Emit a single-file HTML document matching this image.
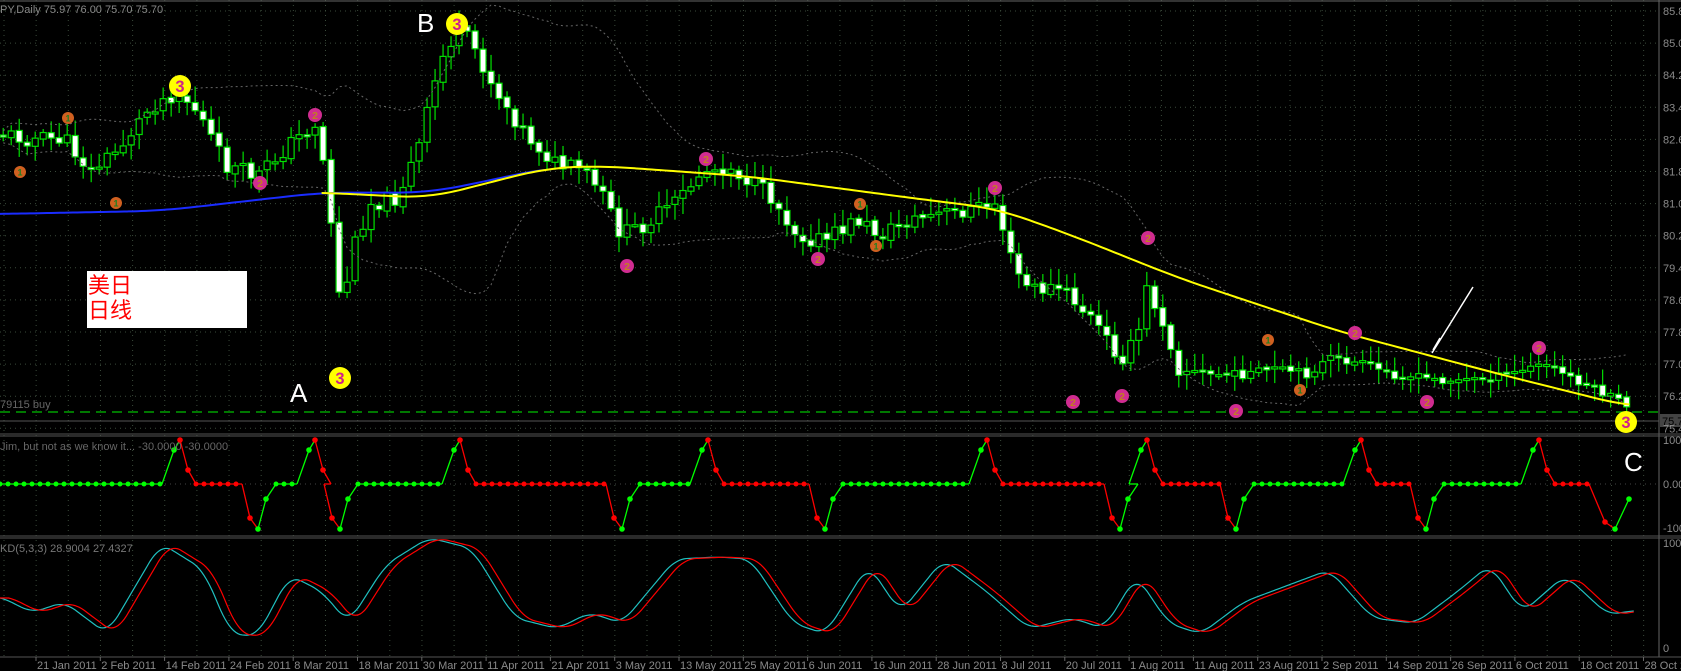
<!DOCTYPE html>
<html><head><meta charset="utf-8"><style>
html,body{margin:0;padding:0;background:#000;width:1681px;height:671px;overflow:hidden}
svg{display:block}
text{font-family:"Liberation Sans",sans-serif}
</style></head><body>
<svg id="s" width="1681" height="671" xmlns="http://www.w3.org/2000/svg">
<rect width="1681" height="671" fill="#000"/>
<g id="grid"></g>
<g id="main"></g>
<g id="ind"></g>
<g id="lab"></g>
</svg>
<script>
const NS="http://www.w3.org/2000/svg";
function el(p,t,a,txt){const e=document.createElementNS(NS,t);for(const k in a)e.setAttribute(k,a[k]);if(txt!==undefined)e.textContent=txt;document.getElementById(p).appendChild(e);return e;}
const SX=1.072,SY=1.07;
function interp(pts,x){if(x<=pts[0][0])return pts[0][1];for(let i=1;i<pts.length;i++){if(x<=pts[i][0]){const a=pts[i-1],b=pts[i];return a[1]+(b[1]-a[1])*(x-a[0])/(b[0]-a[0]);}}return pts[pts.length-1][1];}
function smooth(pts,x,w){let s=0,n=0;for(let k=-w;k<=w;k+=2){s+=interp(pts,x+k);n++;}return s/n;}
const AX=1659;
for(let i=0;i<14;i++){const y=11+i*32.1;el('grid','line',{x1:0,x2:AX,y1:y,y2:y,stroke:'#3a4a3a','stroke-dasharray':'1,4'});
 el('lab','text',{x:AX+4,y:y+4,fill:'#8a8a8a','font-size':'11'},(85.8-i*0.8).toFixed(1));}
for(let x=4;x<AX;x+=32.15){el('grid','line',{x1:x,x2:x,y1:0,y2:657,stroke:'#3a4a3a','stroke-dasharray':'1,4'});}
el('grid','line',{x1:0,x2:1681,y1:1,y2:1,stroke:'#666'});
el('grid','line',{x1:AX,x2:AX,y1:0,y2:657,stroke:'#666'});
[434,436,536,538,657].forEach(y=>el('grid','line',{x1:0,x2:1681,y1:y,y2:y,stroke:'#555'}));
el('grid','line',{x1:0,x2:AX,y1:484,y2:484,stroke:'#444','stroke-dasharray':'1,4'});
const P=[[0,125],[30,130],[60,130],[85,160],[110,140],[140,100],[165,85],[185,105],[210,155],[240,165],[270,135],[295,115],[305,170],[318,290],[330,230],[345,190],[370,185],[390,140],[410,60],[425,30],[440,40],[460,80],[490,125],[520,155],[545,160],[560,180],[580,220],[600,210],[630,190],[655,160],[680,155],[700,170],[720,185],[745,220],[770,225],[800,205],[820,220],[850,205],[880,200],[910,195],[930,190],[945,250],[960,270],[990,270],[1020,300],[1045,335],[1060,320],[1070,270],[1085,300],[1100,345],[1130,350],[1160,350],[1190,345],[1220,350],[1240,335],[1270,340],[1300,350],[1340,355],[1370,355],[1400,352],[1440,340],[1470,355],[1500,370],[1520,380]];
let seed=11;function rnd(){seed=(seed*9301+49297)%233280;return seed/233280;}
let closes=[],xs=[];let prev=interp(P,0);
for(let d=3;d<=1522;d+=7.46){const amp=d>1100?8:16;const c=interp(P,d)+(rnd()-0.5)*amp;const x=d*SX;const o=prev+(rnd()-0.5)*3;prev=c;
 const yo=o*SY,yc=c*SY;const top=Math.min(yo,yc)-rnd()*14-3,bot=Math.max(yo,yc)+rnd()*14+3;
 el('main','line',{x1:x,x2:x,y1:top,y2:bot,stroke:'#00e000','stroke-width':1.2});
 const h=Math.max(Math.abs(yc-yo),2);
 el('main','rect',{x:x-3,y:Math.min(yo,yc),width:6,height:h,fill:yc>yo?'#fff':'#000',stroke:'#00e000','stroke-width':1.2});
 closes.push(c*SY);xs.push(x);}
let up=[],lo=[];for(let i=0;i<closes.length;i++){const w=closes.slice(Math.max(0,i-19),i+1);const m=w.reduce((a,b)=>a+b,0)/w.length;const sd=Math.sqrt(w.reduce((a,b)=>a+(b-m)*(b-m),0)/w.length);up.push([xs[i],m-1.6*sd-6]);lo.push([xs[i],m+1.6*sd+6]);}
[up,lo].forEach(a=>el('main','polyline',{points:a.map(p=>p[0]+','+p[1]).join(' '),fill:'none',stroke:'#666','stroke-width':1,'stroke-dasharray':'2,3'}));
const Y=[[300,180],[400,185],[510,157],[560,155],[700,165],[850,185],[930,195],[1000,220],[1100,260],[1250,310],[1400,350],[1520,380]];
const B=[[0,200],[150,197],[300,180],[400,180],[450,170],[510,157]];
function poly(pts,st,w){let s=[];for(let d=pts[0][0];d<=pts[pts.length-1][0];d+=4)s.push((d*SX)+','+(smooth(pts,d,30)*SY));el('main','polyline',{points:s.join(' '),fill:'none',stroke:st,'stroke-width':w});}
poly(B,'#1a2cff',2);poly(Y,'#ffff00',2);
el('main','line',{x1:0,x2:AX,y1:412,y2:412,stroke:'#00c000','stroke-width':1.3,'stroke-dasharray':'10,6'});
el('main','line',{x1:0,x2:AX,y1:421,y2:421,stroke:'#555','stroke-width':1});
el('main','rect',{x:AX+1,y:414,width:22,height:13,fill:'#444'});
el('lab','text',{x:AX+3,y:425,fill:'#000','font-size':'11'},'75.7');
el('main','line',{x1:1432,x2:1473,y1:353,y2:287,stroke:'#fff','stroke-width':1.5});
el('main','line',{x1:1433,x2:1440,y1:350,y2:338,stroke:'#fff','stroke-width':1.5});
function mk(x,y,r,fill,t,tc){el('main','circle',{cx:x,cy:y,r:r,fill:fill});el('main','text',{x:x,y:y+r*0.55,'text-anchor':'middle',fill:tc,'font-size':r*1.5,'font-weight':'bold'},t);}
[[180,86],[457,24],[340,378],[1626,422]].forEach(p=>mk(p[0],p[1],11,'#ffff00','3','#d0208a'));
[[315,115],[260,183],[706,159],[627,266],[818,259],[995,188],[1148,238],[1122,396],[1236,411],[1355,333],[1427,402],[1539,348],[1073,402]].forEach(p=>mk(p[0],p[1],7,'#d02c90','2','#c08020'));
[[20,172],[68,118],[116,203],[860,204],[876,246],[1268,340],[1300,390]].forEach(p=>mk(p[0],p[1],6,'#d06020','1','#208020'));
el('lab','rect',{x:87,y:271,width:160,height:57,fill:'#fff'});
el('lab','text',{x:88,y:293,fill:'#f00','font-size':'22','font-family':'"Noto Sans CJK SC",sans-serif'},'美日');
el('lab','text',{x:88,y:318,fill:'#f00','font-size':'22','font-family':'"Noto Sans CJK SC",sans-serif'},'日线');
el('lab','text',{x:290,y:402,fill:'#fff','font-size':'26','font-family':'"Liberation Serif",serif'},'A');
el('lab','text',{x:417,y:32,fill:'#fff','font-size':'26','font-family':'"Liberation Serif",serif'},'B');
el('lab','text',{x:1624,y:471,fill:'#fff','font-size':'26','font-family':'"Liberation Serif",serif'},'C');
el('lab','text',{x:0,y:13,fill:'#888','font-size':'11'},'PY,Daily  75.97 76.00 75.70 75.70');
el('lab','text',{x:0,y:408,fill:'#666','font-size':'11'},'79115 buy');
el('lab','text',{x:0,y:450,fill:'#666','font-size':'11'},'Jim, but not as we know it...  -30.0000 -30.0000');
el('lab','text',{x:0,y:552,fill:'#777','font-size':'11'},'KD(5,3,3) 28.9004 27.4327');
[['100',444],['0.00',488],['-100',532],['100',547],['0',652]].forEach(t=>el('lab','text',{x:AX+4,y:t[1],fill:'#8a8a8a','font-size':'11'},t[0]));
const dates=['21 Jan 2011','2 Feb 2011','14 Feb 2011','24 Feb 2011','8 Mar 2011','18 Mar 2011','30 Mar 2011','11 Apr 2011','21 Apr 2011','3 May 2011','13 May 2011','25 May 2011','6 Jun 2011','16 Jun 2011','28 Jun 2011','8 Jul 2011','20 Jul 2011','1 Aug 2011','11 Aug 2011','23 Aug 2011','2 Sep 2011','14 Sep 2011','26 Sep 2011','6 Oct 2011','18 Oct 2011','28 Oct 2011'];
dates.forEach((d,i)=>{const x=36+i*64.3;el('lab','line',{x1:x,x2:x,y1:657,y2:661,stroke:'#666'});el('lab','text',{x:x+1,y:669,fill:'#8a8a8a','font-size':'11'},d);});
const Z=484,TOP=440,BOT=529;
const peaks=[180,315,460,708,987,1147,1361,1539],troughs=[258,340,622,825,1120,1236,1426,1619];
let pts=[[0,Z,'g']];
const ev=[];peaks.forEach(p=>ev.push(['p',p]));troughs.forEach(t=>ev.push(['t',t]));ev.sort((a,b)=>a[1]-b[1]);
ev.forEach(e=>{const x=e[1];if(e[0]=='p'){pts.push([x-18,Z,'g']);pts.push([x-6,TOP+10,'g']);pts.push([x,TOP,'r']);pts.push([x+8,TOP+30,'r']);pts.push([x+16,Z,'r']);}
 else{if(x<1600){pts.push([x-16,Z,'r']);pts.push([x-8,TOP+78,'r']);pts.push([x,BOT,'g']);pts.push([x+8,BOT-30,'g']);pts.push([x+18,Z,'g']);}else{pts.push([x-30,Z,'r']);pts.push([x-14,Z+38,'r']);pts.push([x-4,BOT,'g']);pts.push([x+10,Z+15,'g']);}}});
if(pts[pts.length-1][0]<1600)pts.push([1630,Z,'g']);
for(let i=1;i<pts.length;i++){const a=pts[i-1],b=pts[i];const col=(a[2]=='r')?'#f00':'#0f0';
 el('ind','line',{x1:a[0],y1:a[1],x2:b[0],y2:b[1],stroke:col,'stroke-width':1.3});
 if(a[1]==Z&&b[1]==Z){for(let x=a[0];x<b[0];x+=8)el('ind','circle',{cx:x,cy:Z,r:2.5,fill:a[2]=='r'?'#f00':'#0f0'});}}
pts.forEach(p=>{if(p[1]!=Z)el('ind','circle',{cx:p[0],cy:p[1],r:2.8,fill:p[2]=='r'?'#f00':'#0f0'});});
const K=[[0,565],[30,580],[60,570],[100,600],[150,515],[190,540],[215,600],[240,602],[270,545],[300,560],[325,590],[360,535],[400,510],[440,520],[480,585],[520,595],[550,580],[580,590],[630,530],[670,528],[700,530],[740,590],[770,600],[810,535],[840,580],[880,530],[920,560],[960,595],[1000,585],[1030,595],[1060,545],[1090,590],[1120,600],[1160,570],[1200,555],[1240,540],[1280,585],[1320,590],[1360,560],[1390,535],[1420,580],[1460,545],[1500,582],[1525,578]];
function sto(shift,col){let s=[];for(let d=0;d<=1525;d+=2){let y=smooth(K,Math.max(0,d-shift),10);s.push((d*SX)+','+(y*SY-8));}el('ind','polyline',{points:s.join(' '),fill:'none',stroke:col,'stroke-width':1.2});}
sto(0,'#20c0c0');sto(8,'#ff0000');
</script>
</body></html>
